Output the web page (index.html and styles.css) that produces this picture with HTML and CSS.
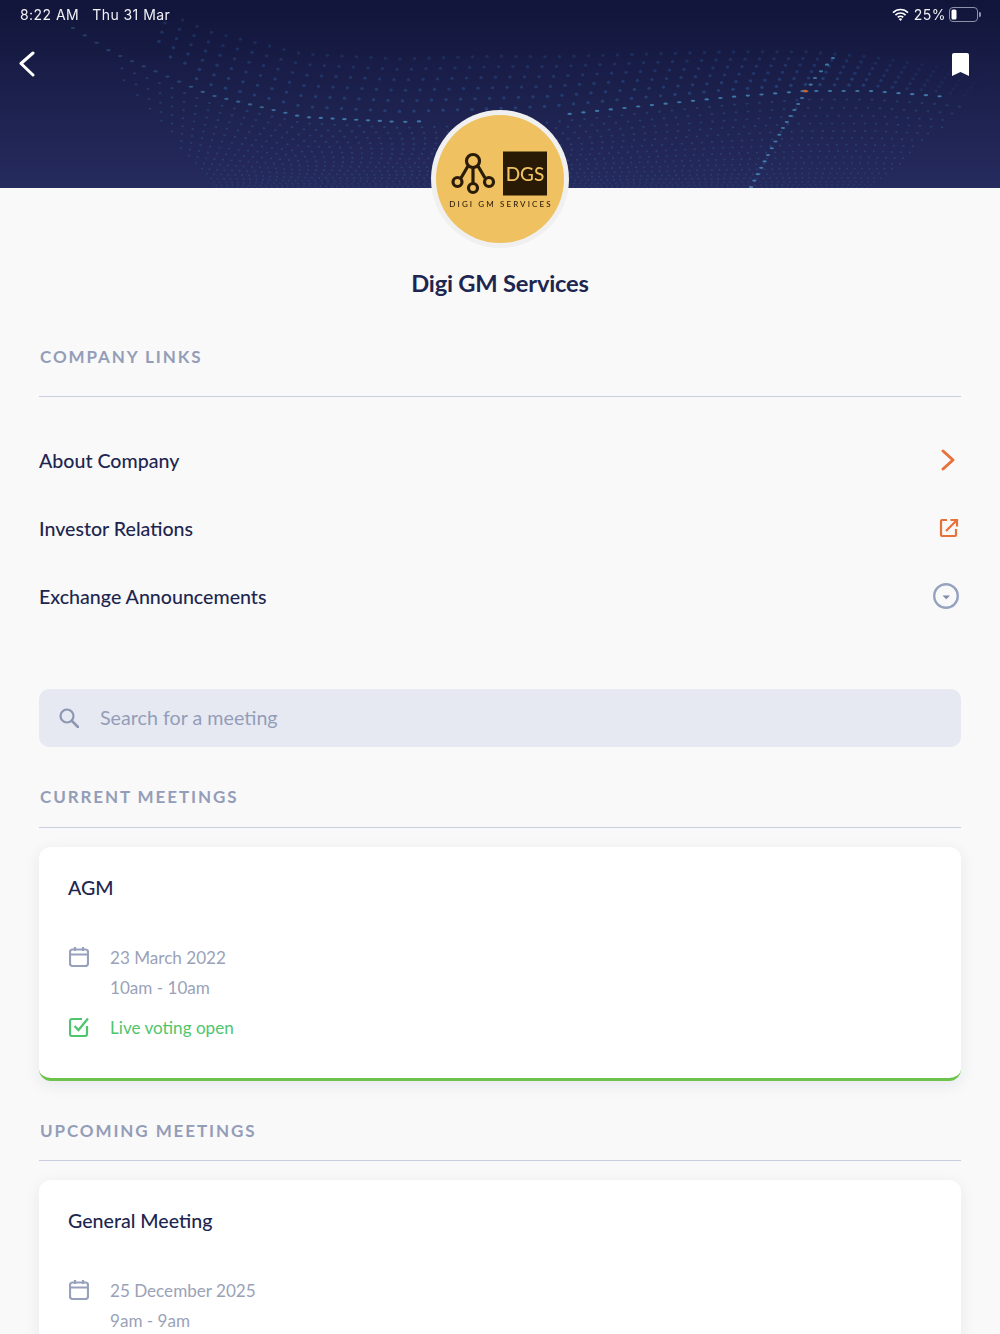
FILE: index.html
```html
<!DOCTYPE html>
<html lang="en">
<head>
    <meta charset="UTF-8" />
    <meta name="viewport" content="width=device-width, initial-scale=1" />
    <title>Digi GM Services</title>
    <link rel="stylesheet" href="styles.css">
</head>
<body>
<div class="page">

    <header class="banner">
        <canvas id="dots" class="banner-dots" width="1000" height="188"></canvas>
        <div class="status-bar">
            <div class="status-left">
                <span>8:22 AM</span>
                <span>Thu 31 Mar</span>
            </div>
            <div class="status-right">
                <svg class="icon-wifi" viewBox="0 0 17 13">
                    <path d="M1 4.6a10.6 10.6 0 0 1 15 0M3.4 7.1a7.2 7.2 0 0 1 10.2 0M5.8 9.4a3.8 3.8 0 0 1 5.4 0" fill="none" stroke="#fff" stroke-width="1.7"/>
                    <path d="M8.5 13 6.7 11a2.6 2.6 0 0 1 3.6 0z" fill="#fff"/>
                </svg>
                <span class="status-percent">25%</span>
                <svg class="icon-battery" viewBox="0 0 32 15">
                    <rect x="0.5" y="0.5" width="28" height="14" rx="3.5" fill="none" stroke="#8c90a8"/>
                    <rect x="2.5" y="2.5" width="5" height="10" rx="1.5" fill="#fff"/>
                    <path d="M30 5v5a2.5 2.5 0 0 0 0-5z" fill="#8c90a8"/>
                </svg>
            </div>
        </div>
        <div class="top-nav">
            <svg class="icon-back" viewBox="0 0 16 26">
                <path d="M14 2 2 12.500 14 24" fill="none" stroke="#fff" stroke-width="3" stroke-linecap="round" stroke-linejoin="round"/>
            </svg>
            <svg class="icon-bookmark" viewBox="0 0 17 23">
                <path d="M0 2q0-2 2-2h13q2 0 2 2v21l-8.500-4-8.500 4z" fill="#fff"/>
            </svg>
        </div>
    </header>

    <div class="company">
        <svg class="company-logo" viewBox="0 0 138 138">
            <circle cx="69" cy="69" r="69" fill="#f0f0f0"/>
            <circle cx="69" cy="69" r="64" fill="#efc161"/>
            <g fill="none" stroke="#2a1c08" stroke-width="3.200">
                <path d="M42 58v15M37 56 30 68M47 56 54 68"/>
                <circle cx="42" cy="51" r="6.500"/>
                <circle cx="26.500" cy="72" r="4.500"/>
                <circle cx="42" cy="78" r="4.500"/>
                <circle cx="58" cy="72" r="4.500"/>
            </g>
            <rect x="72" y="41.500" width="44" height="44" fill="#291a05"/>
            <text class="logo-mark" x="94" y="70.500" text-anchor="middle">DGS</text>
            <text class="logo-name" x="70" y="97" text-anchor="middle">DIGI GM SERVICES</text>
        </svg>
        <h1>Digi GM Services</h1>
    </div>

    <main class="content">
        <h2 class="section-title section-title-links">COMPANY LINKS</h2>
        <ul class="links">
            <li>
                <span>About Company</span>
                <svg class="link-icon" viewBox="0 0 24 24">
                    <path d="M6 3l10 9-10 9" fill="none" stroke="#e8703a" stroke-width="3" stroke-linecap="round" stroke-linejoin="round"/>
                </svg>
            </li>
            <li>
                <span>Investor Relations</span>
                <svg class="link-icon" viewBox="0 0 24 24">
                    <path d="M10 4H5Q4 4 4 5v14q0 1 1 1h13q1 0 1-1v-6M9 15 19.500 4.500M13.500 4H20v6.500" fill="none" stroke="#e8703a" stroke-width="2.200"/>
                </svg>
            </li>
            <li>
                <span>Exchange Announcements</span>
                <svg class="link-icon link-icon-wide" viewBox="0 0 26 26">
                    <circle cx="13" cy="13" r="11.800" fill="none" stroke="#96a3c0" stroke-width="2.400"/>
                    <path d="M9.500 12.500H17l-3.700 3.700z" fill="#7f8aa8"/>
                </svg>
            </li>
        </ul>

        <div class="search">
            <svg class="search-icon" viewBox="0 0 20 20">
                <circle cx="8" cy="8" r="6.500" fill="none" stroke="#8d97b2" stroke-width="2.200"/>
                <path d="M13 13l6 6" stroke="#8d97b2" stroke-width="2.600" stroke-linecap="round"/>
            </svg>
            <span class="search-text">Search for a meeting</span>
        </div>

        <h2 class="section-title">CURRENT MEETINGS</h2>
        <section class="meeting meeting-live">
            <h3>AGM</h3>
            <div class="meeting-row">
                <svg class="meeting-icon" viewBox="0 0 20 20">
                    <rect x="1" y="2.500" width="18" height="16.500" rx="2.500" fill="none" stroke="#97a1bb" stroke-width="2.200"/>
                    <path d="M1 7.500h18M6 0v4M14 0v4" stroke="#97a1bb" stroke-width="2.200"/>
                </svg>
                <div>23 March 2022</div>
            </div>
            <div class="meeting-row"><div class="meeting-time">10am - 10am</div></div>
            <div class="meeting-row meeting-status">
                <svg class="meeting-icon" viewBox="0 0 20 20">
                    <path d="M13 2H3Q1 2 1 4v13q0 2 2 2h13q2 0 2-2V9" fill="none" stroke="#4fc56d" stroke-width="2.200"/>
                    <path d="M5.500 9l4 4L19 1.500" fill="none" stroke="#4fc56d" stroke-width="2.200"/>
                </svg>
                <div>Live voting open</div>
            </div>
        </section>

        <h2 class="section-title section-title-next">UPCOMING MEETINGS</h2>
        <section class="meeting">
            <h3>General Meeting</h3>
            <div class="meeting-row">
                <svg class="meeting-icon" viewBox="0 0 20 20">
                    <rect x="1" y="2.500" width="18" height="16.500" rx="2.500" fill="none" stroke="#97a1bb" stroke-width="2.200"/>
                    <path d="M1 7.500h18M6 0v4M14 0v4" stroke="#97a1bb" stroke-width="2.200"/>
                </svg>
                <div>25 December 2025</div>
            </div>
            <div class="meeting-row"><div class="meeting-time">9am - 9am</div></div>
        </section>
    </main>

</div>
<script src="banner.js"></script>
</body>
</html>
```

FILE: styles.css
```css
html, body {
    margin: 0;
    padding: 0;
    background-color: #f9f9f9;
}
.page {
    height: 1334px;
    overflow: hidden;
    font-family: Lato, "Open Sans", sans-serif;
    color: #1d2650;
}
.banner {
    position: relative;
    height: 188px;
    box-sizing: border-box;
    background: linear-gradient(#11153a, #262b5e);
    color: #fff;
}
.banner-dots {
    position: absolute;
    top: 0;
    left: 0;
}
.status-bar {
    position: relative;
    display: flex;
    justify-content: space-between;
    align-items: center;
    height: 28px;
    padding: 0 19px 0 20px;
    font-family: Inter, "Liberation Sans", sans-serif;
    font-size: 14px;
    letter-spacing: 0.45px;
    color: #f2f2f5;
}
.status-left {
    display: flex;
    gap: 13px;
}
.status-right {
    display: flex;
    align-items: center;
    gap: 5px;
}
.status-percent {
    margin-right: -2px;
}
.icon-wifi {
    width: 17px;
    height: 13px;
}
.icon-battery {
    width: 32px;
    height: 15px;
}
.top-nav {
    position: relative;
    display: flex;
    justify-content: space-between;
    align-items: center;
    padding: 23px 31px 0 19px;
}
.icon-back {
    width: 16px;
    height: 26px;
}
.icon-bookmark {
    width: 17px;
    height: 23px;
}
.company {
    display: flex;
    flex-direction: column;
    align-items: center;
    margin-top: -78px;
}
.company-logo {
    position: relative;
    width: 138px;
    height: 138px;
}
.logo-mark {
    font-family: Lato, sans-serif;
    font-size: 19px;
    font-weight: 500;
    fill: #efc161;
}
.logo-name {
    font-family: Lato, sans-serif;
    font-size: 8px;
    font-weight: 500;
    letter-spacing: 2.1px;
    fill: #2a1c08;
}
.company h1 {
    margin: 19px 0 1px;
    font-size: 23.7px;
    line-height: 32px;
    font-weight: bold;
    letter-spacing: -0.2px;
}
.content {
    padding: 0 39px;
}
.section-title {
    margin: 40px 0 0;
    padding: 0 0 20px 1px;
    border-bottom: 1px solid #c9cfe0;
    font-size: 17px;
    line-height: 20px;
    font-weight: bold;
    letter-spacing: 1.9px;
    color: #949db8;
}
.section-title-links {
    margin-top: 47px;
    padding-bottom: 29px;
}
.section-title-next {
    margin-top: 40px;
    padding-bottom: 19px;
}
.links {
    list-style: none;
    margin: 30px 0 0;
    padding: 0;
}
.links li {
    display: flex;
    justify-content: space-between;
    align-items: center;
    box-sizing: border-box;
    height: 68px;
    padding-bottom: 2px;
    font-size: 19.6px;
    font-weight: 500;
}
.link-icon {
    width: 24px;
    height: 24px;
}
.link-icon-wide {
    width: 26px;
    height: 26px;
    margin-right: 2px;
}
.search {
    display: flex;
    align-items: center;
    gap: 21px;
    height: 58px;
    margin-top: 58px;
    padding-left: 20px;
    border-radius: 10px;
    background-color: #e6e9f2;
    font-size: 19.7px;
    color: #949db8;
}
.search-text {
    padding-bottom: 2px;
}
.search-icon {
    width: 20px;
    height: 20px;
}
.section-title + .meeting {
    margin-top: 19px;
}
.meeting {
    box-sizing: border-box;
    height: 234px;
    padding: 27px 29px 0;
    border-radius: 12px;
    background-color: #fff;
    box-shadow: 0 4px 16px rgba(30, 40, 80, 0.08);
}
.meeting-live {
    border-bottom: 3px solid #6cc24a;
}
.meeting h3 {
    margin: 0 0 40px;
    font-size: 19.6px;
    line-height: 28px;
    font-weight: 500;
}
.meeting-row {
    display: flex;
    align-items: center;
    gap: 21px;
    height: 30px;
    font-size: 17.1px;
    color: #9aa2b8;
}
.meeting-time {
    margin-left: 42px;
}
.meeting-icon {
    width: 20px;
    height: 20px;
    margin-left: 1px;
}
.meeting-status {
    margin-top: 10px;
    color: #4fc56d;
}
```

FILE: banner.js
```js
// dotted mesh behind the banner
const canvas = document.getElementById('dots');
const ctx = canvas.getContext('2d');

const rowLine = [[73, 28], [113, 53], [210, 95], [303, 117], [400, 122], [500, 119], [550, 116], [643, 106], [730, 97], [805, 91], [870, 91], [937, 96], [1000, 104]];
const colLine = [[751, 187], [768, 155], [783, 128], [802, 98], [815, 78], [833, 58], [842, 52]];

function rowY(x) {
    if (x <= rowLine[0][0]) return rowLine[0][1];
    for (let i = 1; i < rowLine.length; i++) {
        const a = rowLine[i - 1], b = rowLine[i];
        if (x <= b[0]) return a[1] + (b[1] - a[1]) * (x - a[0]) / (b[0] - a[0]);
    }
    return rowLine[rowLine.length - 1][1];
}

function dot(x, y, rx, ry, color, alpha) {
    ctx.globalAlpha = alpha;
    ctx.fillStyle = color;
    ctx.beginPath();
    ctx.ellipse(x, y, rx, ry, 0, 0, Math.PI * 2);
    ctx.fill();
}

// rows above the bright line
for (let k = 1; k <= 6; k++) {
    for (let i = 0; i < 60; i++) {
        const x = 150 + k * 3 + i * 14.5;
        const scale = x < 500 ? 1 : 1 - 0.42 * (x - 500) / 340;
        const d = k * 10.5 * scale;
        const y = rowY(x) - d;
        if (y < 18 || x > 990) continue;
        if (x < 75 + (y - 20) * 1.2 + 50) continue;
        const fadeTop = 0.3 + 0.3 * (1 - k / 6);
        const fadeEdge = x > 850 ? Math.max(0, 1 - (x - 850) / 150) : 1;
        dot(x, y, 1.8, 1.6, '#2a5590', fadeTop * fadeEdge);
    }
}

// rows below the bright line, closing up towards the bottom
for (let k = 1; k <= 16; k++) {
    const u = 1 - Math.pow(1 - k / 17, 1.5);
    const gap = 13 - k * 0.5;
    for (let x = 120 + k * 2; x < 960; x += gap) {
        const y = rowY(x) + u * (189 - rowY(x));
        if (x < 137 + (y - 100) * 0.9) continue;
        if (x > 985 - (y - 96) * 1.25) continue;
        dot(x, y, Math.max(0.8, 1.6 - k * 0.05), 1.1 - k * 0.02, '#33609c', 0.38);
    }
}

// the two bright lines
for (let x = 73; x < 945; x += x < 385 ? 11.800 : 13.700) {
    if (x > 431 && x < 569) continue;
    const bright = x < 180 ? 0.3 : 0.45 + Math.min(0.3, (x - 180) / 500);
    dot(x, rowY(x), 2.300, 1.100, '#4a93c4', bright);
}
for (let i = 1; i < colLine.length; i++) {
    const a = colLine[i - 1], b = colLine[i];
    const steps = Math.round((b[1] - a[1]) / -6.500);
    for (let s = 0; s < steps; s++) {
        const t = s / steps;
        dot(a[0] + (b[0] - a[0]) * t, a[1] + (b[1] - a[1]) * t, 2.200, 1.100, '#4a93c4', 0.75);
    }
}
dot(805, 91, 2.500, 1.200, '#c8642c', 1);
```
